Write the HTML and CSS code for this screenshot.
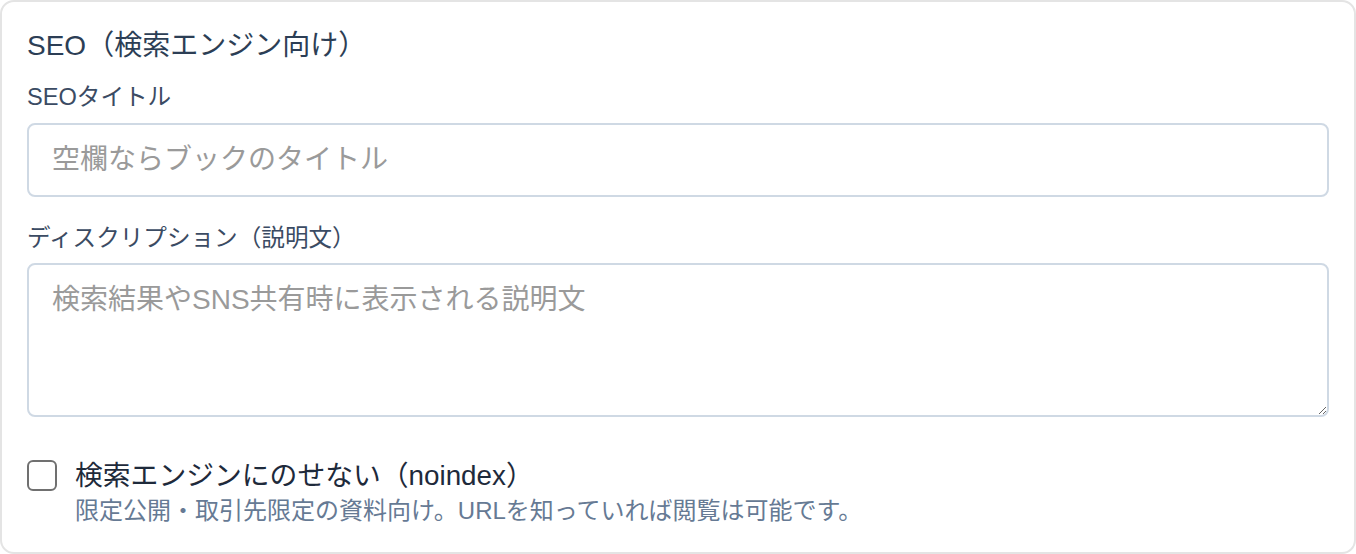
FILE: index.html
```html
<!DOCTYPE html>
<html lang="ja">
<head>
    <meta charset="UTF-8">
    <meta name="viewport" content="width=device-width, initial-scale=1.0">
    <title>SEO設定</title>
    <link rel="stylesheet" href="styles.css">
</head>
<body>
    <section class="seo-card">
        <h2 class="seo-title">SEO（検索エンジン向け）</h2>

        <label class="field-label" for="seo_title">SEOタイトル</label>
        <input class="field-input" type="text" id="seo_title" name="seo_title" placeholder="空欄ならブックのタイトル">

        <label class="field-label" for="seo_description">ディスクリプション（説明文）</label>
        <textarea class="field-textarea" id="seo_description" name="seo_description" placeholder="検索結果やSNS共有時に表示される説明文"></textarea>

        <div class="noindex-row">
            <input class="noindex-check" type="checkbox" id="noindex" name="noindex">
            <div class="noindex-text">
                <label class="noindex-label" for="noindex">検索エンジンにのせない（noindex）</label>
                <p class="noindex-help">限定公開・取引先限定の資料向け。URLを知っていれば閲覧は可能です。</p>
            </div>
        </div>
    </section>
</body>
</html>
```

FILE: styles.css
```css
body {
    margin: 0;
    background: #ffffff;
    font-family: "Liberation Sans", "Noto Sans CJK JP", sans-serif;
}
.seo-card {
    box-sizing: border-box;
    width: 1356px;
    height: 554px;
    border: 2px solid #e4e4e4;
    border-radius: 14px;
    padding: 22px 25px 0 25px;
    background: #ffffff;
}
.seo-title {
    margin: 0 0 12px 0;
    font-size: 28px;
    line-height: 44px;
    font-weight: normal;
    color: #2c3e55;
}
.field-label {
    display: block;
    font-size: 23.6px;
    line-height: 34px;
    color: #3b4b63;
    margin-bottom: 9px;
}
.field-input, .field-textarea {
    display: block;
    box-sizing: border-box;
    width: 100%;
    border: 2px solid #cfd9e4;
    border-radius: 8px;
    font-family: inherit;
    font-size: 28px;
    color: #333333;
    background: #ffffff;
    outline: none;
}
.field-input {
    height: 74px;
    padding: 0 23px;
    margin-bottom: 24px;
}
.field-textarea {
    height: 154px;
    padding: 14px 23px;
    line-height: 42px;
    resize: vertical;
    margin-top: -1px;
}
.field-input::placeholder, .field-textarea::placeholder {
    color: #9a9a9a;
}
.noindex-row {
    display: flex;
    align-items: flex-start;
    gap: 18px;
    margin-top: 42px;
}
.noindex-check {
    appearance: none;
    -webkit-appearance: none;
    box-sizing: border-box;
    width: 30px;
    height: 31px;
    margin: 1px 0 0 0;
    border: 2px solid #707070;
    border-radius: 6px;
    background: #ffffff;
    flex-shrink: 0;
}
.noindex-label {
    display: block;
    font-size: 27.8px;
    line-height: 34px;
    color: #1e2a3b;
}
.noindex-help {
    margin: 1px 0 0 0;
    font-size: 24px;
    line-height: 34px;
    color: #667a94;
}
```
